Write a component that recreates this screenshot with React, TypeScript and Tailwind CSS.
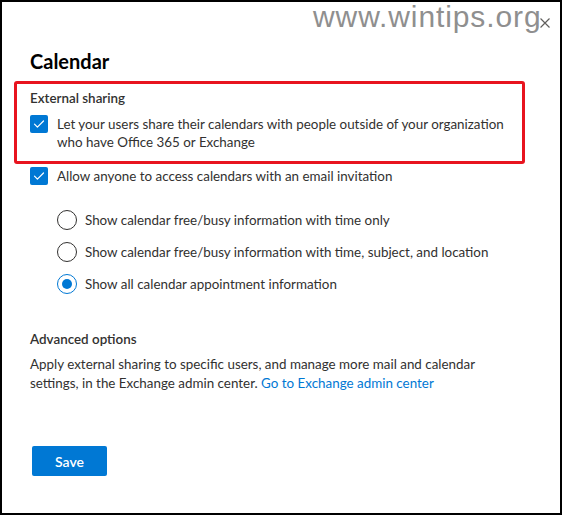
import React from "react";

function Check() {
  return (
    <span className="flex h-[18px] w-[18px] shrink-0 items-center justify-center rounded-[2px] bg-[#0078d4]">
      <svg width="12" height="12" viewBox="0 0 12 12" fill="none">
        <path d="M1.5 6.2 L4.4 9.1 L10.5 3" stroke="white" strokeWidth="1.2" strokeLinecap="round" strokeLinejoin="round" />
      </svg>
    </span>
  );
}

function Radio({ checked }: { checked?: boolean }) {
  return checked ? (
    <span className="flex h-[20px] w-[20px] shrink-0 items-center justify-center rounded-full border border-[#0078d4] bg-white">
      <span className="h-[10px] w-[10px] rounded-full bg-[#0078d4]" />
    </span>
  ) : (
    <span className="h-[20px] w-[20px] shrink-0 rounded-full border border-[#323130] bg-white" />
  );
}

export default function App() {
  return (
    <div className="relative h-[515px] w-[562px] overflow-hidden border-2 border-black bg-white font-['Lato',sans-serif] text-[13.4px] text-[#323130]">
      <div className="pl-[28px] pt-[45px]">
        <h1 className="text-[20px] font-bold leading-[28px] text-black">Calendar</h1>

        <div className="ml-[-16px] mt-[6px] w-[511px] rounded-[3px] border-[3px] border-[#e8141f] pb-[10px] pl-[13px] pt-[4px]">
          <div className="font-semibold leading-[20px]">External sharing</div>
          <div className="mt-[7px] flex items-start gap-[9px] leading-[18px]">
            <Check />
            <span className="whitespace-nowrap">
              Let your users share their calendars with people outside of your organization
              <br />
              who have Office 365 or Exchange
            </span>
          </div>
        </div>

        <div className="mt-[3px] flex items-start gap-[9px] leading-[19px]">
          <Check />
          <span>Allow anyone to access calendars with an email invitation</span>
        </div>

        <div className="mt-[18px] flex flex-col pl-[27px]">
          <div className="flex h-[32px] items-center gap-[8px]">
            <Radio />
            <span>Show calendar free/busy information with time only</span>
          </div>
          <div className="flex h-[32px] items-center gap-[8px]">
            <Radio />
            <span>Show calendar free/busy information with time, subject, and location</span>
          </div>
          <div className="flex h-[32px] items-center gap-[8px]">
            <Radio checked />
            <span>Show all calendar appointment information</span>
          </div>
        </div>

        <div className="mt-[29px] font-semibold leading-[20px]">Advanced options</div>
        <p className="mt-[6px] whitespace-nowrap leading-[19px]">
          Apply external sharing to specific users, and manage more mail and calendar
          <br />
          settings, in the Exchange admin center.{" "}
          <a className="text-[#0078d4]">Go to Exchange admin center</a>
        </p>

        <button className="ml-[2px] mt-[53px] h-[30px] w-[75px] rounded-[2px] bg-[#0078d4] text-[14px] font-semibold text-white">
          Save
        </button>
      </div>

      <svg className="absolute left-[537px] top-[15px]" width="12" height="12" viewBox="0 0 12 12">
        <path d="M1.5 1.5 L10.5 10.5 M10.5 1.5 L1.5 10.5" stroke="#605e5c" strokeWidth="1.2" />
      </svg>
      <div className="absolute left-[311px] top-[0px] whitespace-nowrap font-['Liberation_Sans',Arial,sans-serif] text-[30px] leading-[30px] tracking-[0.9px] text-[#8f8f8f] [text-shadow:0_0_2px_#fff,1px_1px_1px_#fff]">
        www.wintips.org
      </div>
    </div>
  );
}
